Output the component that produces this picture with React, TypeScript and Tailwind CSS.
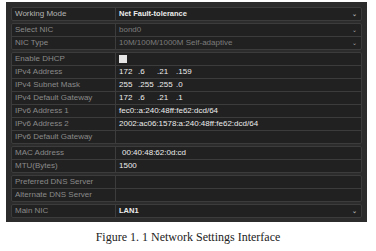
import React from 'react'

type Row = {
  label: string
  value?: React.ReactNode
  dim?: boolean
  arrow?: boolean
  bold?: boolean
  indent?: boolean
}

const Arrow = () => (
  <span className="ml-auto mr-[4px] text-[6px] leading-none text-[#aaa]">⌄</span>
)

const Ip = ({ parts }: { parts: string[] }) => (
  <span className="flex">
    {parts.map((p, i) => (
      <span key={i} className="w-[19px]">
        {i > 0 ? '.' : ''}
        {p}
      </span>
    ))}
  </span>
)

const groups: Row[][] = [
  [{ label: 'Working Mode', value: 'Net Fault-tolerance', arrow: true, bold: true }],
  [
    { label: 'Select NIC', value: 'bond0', dim: true, arrow: true },
    { label: 'NIC Type', value: '10M/100M/1000M Self-adaptive', dim: true, arrow: true },
  ],
  [
    { label: 'Enable DHCP', value: <span className="inline-block h-[8px] w-[8px] bg-[#e6e6e6]" /> },
    { label: 'IPv4 Address', value: <Ip parts={['172 ', '6', '21', '159']} /> },
    { label: 'IPv4 Subnet Mask', value: <Ip parts={['255 ', '255', '255', '0']} /> },
    { label: 'IPv4 Default Gateway', value: <Ip parts={['172 ', '6', '21', '1']} /> },
    { label: 'IPv6 Address 1', value: 'fec0::a:240:48ff:fe62:dcd/64' },
    { label: 'IPv6 Address 2', value: '2002:ac06:1578:a:240:48ff:fe62:dcd/64' },
    { label: 'IPv6 Default Gateway', value: '' },
  ],
  [
    { label: 'MAC Address', value: '00:40:48:62:0d:cd', indent: true },
    { label: 'MTU(Bytes)', value: '1500' },
  ],
  [
    { label: 'Preferred DNS Server', value: '' },
    { label: 'Alternate DNS Server', value: '' },
  ],
  [{ label: 'Main NIC', value: 'LAN1', arrow: true, bold: true }],
]

export default function App() {
  return (
    <div className="w-[376px] h-[251px] bg-white" style={{ fontFamily: '"Liberation Sans", Arial, sans-serif' }}>
      <div className="pt-[2px] pl-[6px]">
        <div className="w-[361px] bg-[#2c2c2c] px-[5px] pt-[5px] pb-[4px] flex flex-col gap-[2px]">
          {groups.map((g, gi) => (
            <div key={gi} className="rounded-[2px] border border-[#3c3c3c] bg-[#212121] flex flex-col">
              {g.map((r, ri) => (
                <div
                  key={ri}
                  className={`flex items-center ${ri > 0 ? 'border-t border-[#3c3c3c] h-[13px]' : 'h-[12px]'}`}
                >
                  <div className="w-[104px] h-full flex items-center pl-[3px] border-r border-[#3c3c3c] text-[8px] text-[#8a8a8a] whitespace-nowrap">
                    <span className={gi === 0 ? 'text-[#b4b4b4]' : ''}>{r.label}</span>
                  </div>
                  <div
                    className={`flex-1 h-full flex items-center whitespace-nowrap ${r.indent ? 'pl-[6px]' : 'pl-[3px]'} ${
                      r.dim ? 'text-[#7c7c7c]' : 'text-[#ececec]'
                    } ${r.bold ? 'font-bold text-[7.5px]' : 'text-[8px]'}`}
                  >
                    {r.value}
                    {r.arrow && <Arrow />}
                  </div>
                </div>
              ))}
            </div>
          ))}
        </div>
      </div>
      <div
        className="mt-[7px] text-center text-[12px] leading-[16px] text-[#222]"
        style={{ fontFamily: '"Liberation Serif", "DejaVu Serif", serif' }}
      >
        Figure 1. 1 Network Settings Interface
      </div>
    </div>
  )
}
